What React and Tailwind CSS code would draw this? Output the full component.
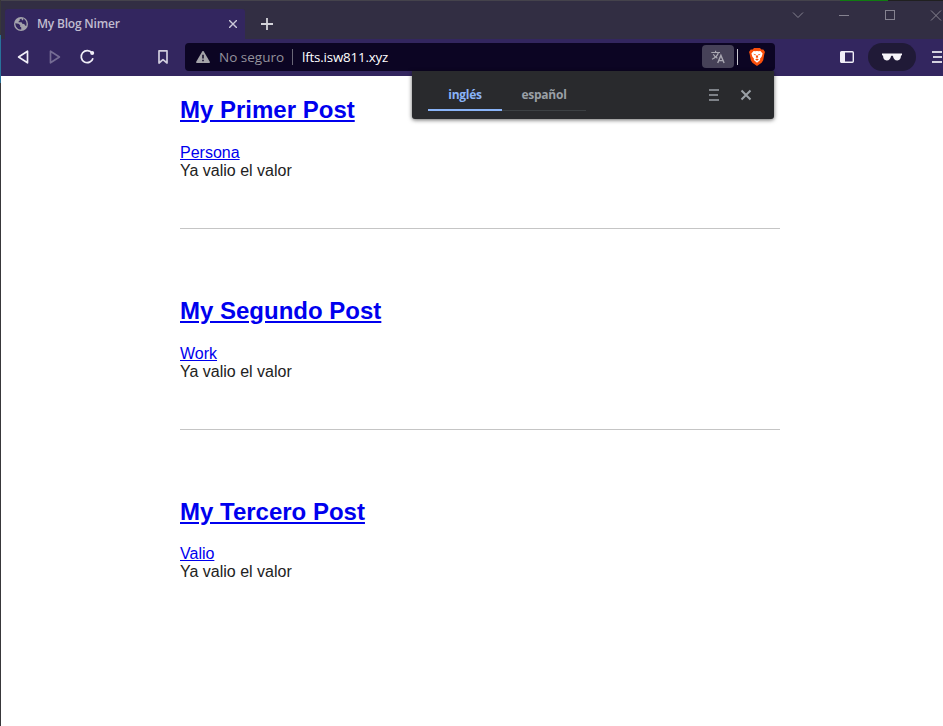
import React from "react";

const posts = [
  { title: "My Primer Post", category: "Persona" },
  { title: "My Segundo Post", category: "Work" },
  { title: "My Tercero Post", category: "Valio" },
];

function GlobeIcon() {
  return (
    <svg width="14" height="14" viewBox="0 0 14 14" className="shrink-0">
      <circle cx="7" cy="7" r="7" fill="#a3a2ab" />
      <path d="M1.3 6.2 L4.6 6.8 L6.2 8.3 L6.1 9.8 L7.2 10.3 L7.3 12.6 C4 12.6 1.3 10 1.3 6.2Z" fill="#33265f" />
      <path d="M7.3 1.4 L5.6 2.4 L5.7 3.8 L4.5 4.4 L4.7 5.2 L7.6 5.3 L8.3 6.8 L10.2 7.1 L11.1 8.6 L12.2 9 C13.4 5.3 11.3 2.2 9 1.5 L9.4 2.8 L8.2 3.4Z" fill="#33265f" />
    </svg>
  );
}

function TranslateIcon() {
  return (
    <svg width="14" height="14" viewBox="0 0 14 14" fill="none" stroke="#a9a7b2" strokeWidth="1.2">
      <path d="M0.3 2.5H9M4.6 0.7V2.5M7.4 2.5C6.6 5.3 4 7.9 1 9.2M2.3 4.2C3.3 6 4.8 7.3 6.4 8.2" />
      <path d="M6.7 13L9.9 5.4L13.1 13M7.9 10.6H11.9" strokeWidth="1.4" />
    </svg>
  );
}

function BraveIcon() {
  return (
    <svg width="16" height="18" viewBox="0 0 16 18">
      <path d="M5 0H11L12.3 1.4L14.3 1.5L16 4L15.4 5.8L14.2 12.2L12.6 14.8L8 18L3.4 14.8L1.8 12.2L0.6 5.8L0 4L1.7 1.5L3.7 1.4Z" fill="#fb4f0b" />
      <path d="M4.6 3L6.3 3.3L8 2.9L9.7 3.3L11.4 3L13.6 5.6L12.6 8.8L11 10.8L11.2 12L8 14.8L4.8 12L5 10.8L3.4 8.8L2.4 5.6Z" fill="#fff" />
      <path d="M4.2 5.8L7 6.5L6.2 7.5ZM11.8 5.8L9 6.5L9.8 7.5ZM7.4 7.3H8.6L9.3 9.3L8 10L6.7 9.3ZM6.1 11.4L8 10.6L9.9 11.4L8 12.7Z" fill="#fb4f0b" />
    </svg>
  );
}

function TabStrip() {
  return (
    <div className="flex h-[39px] shrink-0 border-t border-[#45434c] bg-[#322e43]">
      <div className="ml-[4px] mt-2 flex h-[30px] w-[240px] items-center rounded-t-[3px] bg-[#33265f] pl-[9px] pr-[8px]">
        <GlobeIcon />
        <span className="ml-[9px] flex-1 whitespace-nowrap font-['Open_Sans',sans-serif] text-[12px] font-semibold leading-4 tracking-[-0.2px] text-[#c1bdd0]">
          My Blog Nimer
        </span>
        <svg width="8" height="8" viewBox="0 0 8 8" stroke="#cbc8d8" strokeWidth="1.4">
          <path d="M0 0L8 8M8 0L0 8" />
        </svg>
      </div>
      <svg width="12" height="12" viewBox="0 0 12 12" className="ml-4 mt-[17px]" stroke="#d4d3da" strokeWidth="1.8">
        <path d="M6 0V12M0 6H12" />
      </svg>
      <div className="ml-auto mt-[8px] flex h-3 items-center">
        <svg width="151" height="12" viewBox="0 0 151 12" fill="none" stroke="#858290">
          <path d="M1 3.5L6 8.5L11 3.5M47 6.5H57M139 1.5L149 11.5M149 1.5L139 11.5" />
          <rect x="93.5" y="1.5" width="9" height="9" />
        </svg>
      </div>
    </div>
  );
}

function AddressBar() {
  return (
    <div className="ml-4 flex h-7 w-[590px] items-center rounded-[4px] bg-[#0c0523] font-['Open_Sans',sans-serif]">
      <svg width="14" height="12" viewBox="0 0 14 12" className="ml-[11px]">
        <path d="M6.2 0.4Q7 -0.5 7.8 0.4L13.8 10.8Q14 12 13 12H1Q0 12 0.2 10.8Z" fill="#a5a4a9" />
        <path d="M7 3.8V7.6M7 8.8V10.3" stroke="#0c0523" strokeWidth="1.5" />
      </svg>
      <span className="ml-[9px] w-[73px] whitespace-nowrap text-[13.5px] leading-5 text-[#94929c]">No seguro</span>
      <div className="h-4 w-px bg-[#6a6777]" />
      <span className="ml-[9px] whitespace-nowrap text-[13.3px] leading-5 tracking-[-0.16px] text-white">lfts.isw811.xyz</span>
      <div className="mb-px ml-auto flex h-[23px] w-8 items-center justify-center rounded-[4px] bg-[#464158]">
        <TranslateIcon />
      </div>
      <div className="ml-[3px] h-4 w-px bg-[#c9c7d0]" />
      <div className="ml-[11px] mr-[10px]">
        <BraveIcon />
      </div>
    </div>
  );
}

function Toolbar() {
  return (
    <div className="flex h-[37px] shrink-0 items-start bg-[#33265f] pt-1">
      <div className="flex h-7 items-center">
        <svg width="152" height="16" viewBox="0 0 152 16" className="ml-4" fill="none" strokeWidth="1.7" strokeLinejoin="round">
          <path d="M10.5 2.2V13.8L1.6 8Z" stroke="#f0eef7" />
          <path d="M33.5 2.2V13.8L42.4 8Z" stroke="#756c94" />
          <path d="M75 4A6 6 0 1 0 76 9.2" stroke="#f0eef7" />
          <circle cx="75.2" cy="3.9" r="2" fill="#f0eef7" />
          <path d="M142 1.8H150V14L146 10.7L142 14Z" stroke="#d1cddd" />
        </svg>
      </div>
      <AddressBar />
      <div className="flex h-7 flex-1 items-center">
        <svg width="14" height="12" viewBox="0 0 14 12" className="ml-[65px]">
          <rect x="0.7" y="0.7" width="12.6" height="10.6" rx="1" fill="none" stroke="#f0eef7" strokeWidth="1.4" />
          <rect x="0.7" y="0.7" width="4.3" height="10.6" fill="#f0eef7" />
        </svg>
        <div className="ml-[14px] flex h-7 w-12 items-center justify-center rounded-full bg-[#201a37]">
          <svg width="20" height="8" viewBox="0 0 20 8" fill="#f7f5fa">
            <path d="M0 0.4H20V2.2L19 2.5C18.8 5.8 17.7 7.4 15.3 7.4C12.8 7.4 11.5 5.8 11 3.2L10 2.6L9 3.2C8.5 5.8 7.2 7.4 4.7 7.4C2.3 7.4 1.2 5.8 1 2.5L0 2.2Z" />
          </svg>
        </div>
        <svg width="10" height="12" viewBox="0 0 10 12" className="ml-4" stroke="#d4d1df" strokeWidth="2">
          <path d="M0 1H11M1 6H10M0 11H11" />
        </svg>
      </div>
    </div>
  );
}

function TranslatePopup() {
  return (
    <div className="absolute left-[412px] top-[71px] flex h-12 w-[362px] rounded-b-[3px] bg-[#292a2d] pl-4 shadow-[0_1px_4px_rgba(0,0,0,0.6)]">
      <div className="flex h-10 font-['Open_Sans',sans-serif] text-[12px] font-bold leading-4 tracking-[-0.25px]">
        <div className="flex w-[74px] justify-center border-b-2 border-[#8ab4f8] pt-4 text-[#8ab4f8]">inglés</div>
        <div className="flex h-10 w-[84px] justify-center border-b border-[#3c4043] pt-4 text-[#9aa0a6]">español</div>
      </div>
      <svg width="43" height="12" viewBox="0 0 43 12" className="ml-auto mr-[22px] mt-[18px]" stroke="#9aa0a6">
        <path d="M0 1H10M0 6H9M0 11H10" strokeWidth="1.6" />
        <path d="M32.5 1.5L41.5 10.5M41.5 1.5L32.5 10.5" strokeWidth="2" />
      </svg>
    </div>
  );
}

export default function App() {
  return (
    <div className="relative flex h-[726px] w-[943px] overflow-hidden bg-white">
      <div className="flex w-px shrink-0 flex-col bg-[#38373a]">
        <div className="mt-[35px] h-12 bg-[#28729b]" />
      </div>
      <div className="flex min-w-0 flex-1 flex-col">
        <TabStrip />
        <Toolbar />
        <main className="ml-[179px] w-[600px] font-['Liberation_Sans',Arial,sans-serif] text-[16px] leading-[18px] text-[#222]">
          {posts.map((post, i) => (
            <article
              key={post.title}
              className={i === 0 ? "pt-5" : "mt-12 border-t border-[#c5c5c5] pt-[68px]"}
            >
              <h1 className="text-[24px] font-bold leading-7 text-[#0000ee]">
                <a className="underline">{post.title}</a>
              </h1>
              <div className="mt-[19.8px]">
                <a className="text-[#0000ee] underline">{post.category}</a>
              </div>
              <p>Ya valio el valor</p>
            </article>
          ))}
        </main>
      </div>
      <div className="absolute left-[840px] top-0 h-px w-12 bg-[#107c10]" />
      <div className="absolute left-[888px] top-0 h-px w-[55px] bg-[#202020]" />
      <TranslatePopup />
    </div>
  );
}
